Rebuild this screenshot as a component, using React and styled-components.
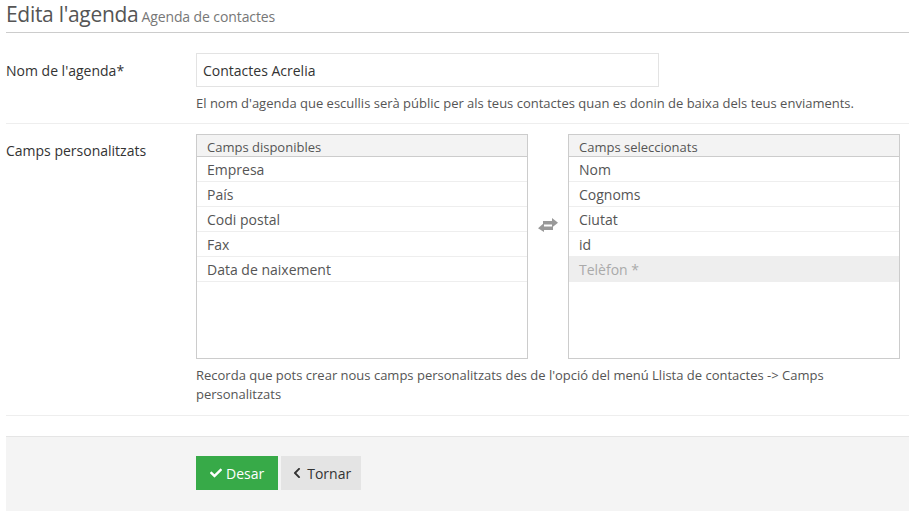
import React from "react";
import styled, { createGlobalStyle } from "styled-components";
import { FaCheck, FaChevronLeft } from "react-icons/fa";

const GlobalStyle = createGlobalStyle`
  body {
    margin: 0;
    background: #fff;
    font-family: "Open Sans", "Liberation Sans", sans-serif;
    color: #333;
  }
`;

const Page = styled.div`
  padding-left: 6px;
`;

const Header = styled.div`
  height: 33px;
  border-bottom: 1px solid #ccc;
  display: flex;
  align-items: baseline;
  gap: 3px;
  box-sizing: border-box;
`;

const Title = styled.h1`
  margin: 0;
  font-size: 21px;
  font-weight: 400;
  color: #555;
  letter-spacing: -0.3px;
  line-height: 28px;
`;

const Subtitle = styled.small`
  font-size: 14px;
  color: #777;
  letter-spacing: -0.1px;
`;

const Row = styled.div`
  display: flex;
  padding: ${(p) => p.$top}px 0 ${(p) => p.$bottom}px;
  border-bottom: 1px solid #eee;
`;

const Label = styled.div`
  width: 190px;
  flex-shrink: 0;
  font-size: 14px;
  color: #333;
  padding-top: ${(p) => p.$top}px;
`;

const Field = styled.div`
  display: flex;
  flex-direction: column;
`;

const Input = styled.input`
  width: 463px;
  height: 34px;
  box-sizing: border-box;
  border: 1px solid #e3e3e3;
  padding: 0 6px;
  font-family: inherit;
  font-size: 14px;
  color: #333;
  outline: none;
`;

const Help = styled.p`
  margin: ${(p) => p.$top}px 0 0;
  font-size: 13px;
  line-height: 19px;
  color: #555;
  width: ${(p) => p.$width || "auto"};
`;

const Lists = styled.div`
  display: flex;
  align-items: flex-start;
`;

const ListBox = styled.div`
  width: 332px;
  height: 225px;
  box-sizing: border-box;
  border: 1px solid #ccc;
  display: flex;
  flex-direction: column;
`;

const ListHead = styled.div`
  height: 22px;
  box-sizing: border-box;
  background: #f3f3f3;
  border-bottom: 1px solid #ccc;
  padding: 4px 10px 0;
  font-size: 13px;
  line-height: 17px;
  color: #555;
`;

const ListItem = styled.div`
  height: 25px;
  box-sizing: border-box;
  border-bottom: 1px solid #eee;
  padding: 2px 10px 0;
  font-size: 14px;
  line-height: 21px;
  color: ${(p) => (p.$disabled ? "#aaa" : "#555")};
  background: ${(p) => (p.$disabled ? "#eee" : "#fff")};
`;

const Swap = styled.div`
  width: 40px;
  display: flex;
  justify-content: center;
  padding-top: 84px;
`;

const Footer = styled.div`
  margin-top: 20px;
  height: 75px;
  background: #f4f4f4;
  border-top: 1px solid #e5e5e5;
  padding: 19px 0 0 190px;
  box-sizing: border-box;
  display: flex;
  align-items: flex-start;
  gap: 3px;
`;

const Button = styled.button`
  height: 34px;
  border: none;
  padding: 0 ${(p) => (p.$primary ? 14 : 10)}px;
  display: flex;
  align-items: center;
  gap: 4px;
  font-family: inherit;
  font-size: 14px;
  color: ${(p) => (p.$primary ? "#fff" : "#333")};
  background: ${(p) => (p.$primary ? "#37aa48" : "#e4e4e4")};
  cursor: pointer;

  svg {
    font-size: 12px;
  }
`;

const SwapIcon = () => (
  <svg width="22" height="14" viewBox="0 0 22 14" fill="#999">
    <rect x="6" y="3" width="10" height="3.5" />
    <polygon points="15,0 21,4.75 15,9.5" />
    <rect x="6" y="8.5" width="10" height="3.5" />
    <polygon points="7,5 1,10.25 7,14" />
  </svg>
);

const available = ["Empresa", "País", "Codi postal", "Fax", "Data de naixement"];
const selected = ["Nom", "Cognoms", "Ciutat", "id"];

const App = () => {
  return (
    <Page>
      <GlobalStyle />
      <Header>
        <Title>Edita l'agenda</Title>
        <Subtitle>Agenda de contactes</Subtitle>
      </Header>

      <Row $top={20} $bottom={10}>
        <Label $top={8}>Nom de l'agenda*</Label>
        <Field>
          <Input defaultValue="Contactes Acrelia" />
          <Help $top={7}>
            El nom d'agenda que escullis serà públic per als teus contactes
            quan es donin de baixa dels teus enviaments.
          </Help>
        </Field>
      </Row>

      <Row $top={10} $bottom={11}>
        <Label $top={7}>Camps personalitzats</Label>
        <Field>
          <Lists>
            <ListBox>
              <ListHead>Camps disponibles</ListHead>
              {available.map((item) => (
                <ListItem key={item}>{item}</ListItem>
              ))}
            </ListBox>
            <Swap>
              <SwapIcon />
            </Swap>
            <ListBox>
              <ListHead>Camps seleccionats</ListHead>
              {selected.map((item) => (
                <ListItem key={item}>{item}</ListItem>
              ))}
              <ListItem $disabled>Telèfon *</ListItem>
            </ListBox>
          </Lists>
          <Help $top={7} $width="660px">
            Recorda que pots crear nous camps personalitzats des de l'opció del
            menú Llista de contactes -&gt; Camps personalitzats
          </Help>
        </Field>
      </Row>

      <Footer>
        <Button $primary>
          <FaCheck />
          Desar
        </Button>
        <Button>
          <FaChevronLeft />
          Tornar
        </Button>
      </Footer>
    </Page>
  );
};

export default App;
